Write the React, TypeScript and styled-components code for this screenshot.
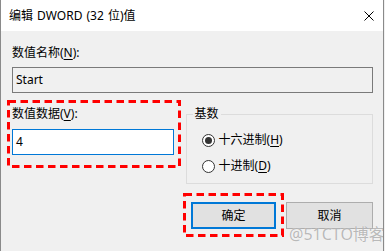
import styled, { createGlobalStyle } from 'styled-components'

const GlobalStyle = createGlobalStyle`
  html, body {
    margin: 0;
    padding: 0;
    background: #f0f0f0;
  }
  body {
    font-family: 'Segoe UI', 'Noto Sans', 'Noto Sans CJK SC', sans-serif;
    font-size: 12px;
    color: #000;
  }
`

const Window = styled.div`
  position: relative;
  width: 384px;
  height: 251px;
  box-sizing: border-box;
  border-left: 1px solid #8a8a8a;
  border-right: 1px solid #8a8a8a;
  background: #f0f0f0;
  display: flex;
  flex-direction: column;
  overflow: hidden;
`

const TitleBar = styled.div`
  height: 31px;
  flex: 0 0 31px;
  background: #fff;
  display: flex;
  align-items: center;
  justify-content: space-between;
  padding: 1px 9px 0 8px;
  box-sizing: border-box;
`

const Title = styled.span`
  font-size: 12px;
  line-height: 16px;
  word-spacing: 1px;
`

const Close = styled.svg`
  width: 10px;
  height: 10px;
  display: block;
`

const Body = styled.div`
  padding: 14px 10px 0 11px;
  display: flex;
  flex-direction: column;
`

const Label = styled.div`
  line-height: 16px;
  height: 16px;
  white-space: nowrap;

  u {
    text-decoration: underline;
    text-underline-offset: 2px;
  }
`

const TextBox = styled.div<{ $active?: boolean }>`
  height: 26px;
  box-sizing: border-box;
  border: 1px solid ${p => (p.$active ? '#0078d7' : '#7a7a7a')};
  background: ${p => (p.$active ? '#fff' : '#f0f0f0')};
  padding: 0 3px;
  display: flex;
  align-items: center;
  line-height: 16px;
`

const NameBox = styled(TextBox)`
  margin-top: 6px;
`

const Row = styled.div`
  display: flex;
  align-items: flex-start;
  margin-top: 13px;
`

const Annotated = styled.div`
  position: relative;
`

const DataColumn = styled(Annotated)`
  width: 162px;
  display: flex;
  flex-direction: column;
  gap: 7px;
`

const Frame = styled.svg<{ $left: number; $top: number }>`
  position: absolute;
  left: ${p => p.$left}px;
  top: ${p => p.$top}px;
  pointer-events: none;
  overflow: visible;
`

const GroupBox = styled.fieldset`
  margin: 0 0 0 12px;
  width: 188px;
  box-sizing: border-box;
  border: 1px solid #dcdcdc;
  padding: 5px 0 4px 15px;
  min-width: 0;

  legend {
    padding: 0 2px;
    margin-left: -9px;
    line-height: 16px;
    height: 16px;
  }
`

const RadioRow = styled.div`
  display: flex;
  align-items: center;
  gap: 4px;
  height: 26px;
  line-height: 16px;

  u {
    text-decoration: underline;
    text-underline-offset: 2px;
  }
`

const RadioDot = styled.span<{ $checked?: boolean }>`
  width: 13px;
  height: 13px;
  box-sizing: border-box;
  border-radius: 50%;
  border: 1px solid #333;
  background: #fff;
  display: flex;
  align-items: center;
  justify-content: center;

  &::after {
    content: '';
    width: 7px;
    height: 7px;
    border-radius: 50%;
    background: ${p => (p.$checked ? '#333' : 'transparent')};
  }
`

const Buttons = styled.div`
  display: flex;
  justify-content: flex-end;
  gap: 10px;
  margin-top: 18px;
`

const Button = styled.div<{ $default?: boolean; $w: number }>`
  width: ${p => p.$w}px;
  height: 27px;
  box-sizing: border-box;
  background: #e1e1e1;
  border: ${p => (p.$default ? '2px solid #0078d7' : '1px solid #adadad')};
  display: flex;
  align-items: center;
  justify-content: center;
  line-height: 16px;
`

const Watermark = styled.div`
  position: absolute;
  left: 288px;
  top: 224px;
  font-family: 'Noto Sans', 'Noto Sans CJK SC', sans-serif;
  font-size: 16px;
  line-height: 20px;
  color: rgba(140, 140, 140, 0.6);
  text-shadow: 0 0 1px rgba(255, 255, 255, 0.9);
  white-space: nowrap;
`

const DashedFrame = ({ left, top, w, h }: { left: number; top: number; w: number; h: number }) => (
  <Frame $left={left} $top={top} width={w} height={h} viewBox={`0 0 ${w} ${h}`}>
    <rect
      x={1.5}
      y={1.5}
      width={w - 3}
      height={h - 3}
      fill='none'
      stroke='#ff0000'
      strokeWidth={3}
      strokeDasharray='7.5 4.5'
    />
  </Frame>
)

export default function App() {
  return (
    <>
      <GlobalStyle />
      <Window>
        <TitleBar>
          <Title>编辑 DWORD (32 位)值</Title>
          <Close viewBox='0 0 10 10'>
            <path d='M0.5 0.5 L9.5 9.5 M9.5 0.5 L0.5 9.5' stroke='#000' strokeWidth={1} fill='none' />
          </Close>
        </TitleBar>
        <Body>
          <Label>
            数值名称(<u>N</u>):
          </Label>
          <NameBox>Start</NameBox>
          <Row>
            <DataColumn>
              <Label>
                数值数据(<u>V</u>):
              </Label>
              <TextBox $active>4</TextBox>
              <DashedFrame left={-5} top={-6} w={174} h={68} />
            </DataColumn>
            <GroupBox>
              <legend>基数</legend>
              <RadioRow>
                <RadioDot $checked />
                <span>
                  十六进制(<u>H</u>)
                </span>
              </RadioRow>
              <RadioRow>
                <RadioDot />
                <span>
                  十进制(<u>D</u>)
                </span>
              </RadioRow>
            </GroupBox>
          </Row>
          <Buttons>
            <Annotated>
              <Button $default $w={85}>确定</Button>
              <DashedFrame left={-8} top={-9} w={101} h={44} />
            </Annotated>
            <Button $w={87}>取消</Button>
          </Buttons>
        </Body>
        <Watermark>@51CTO博客</Watermark>
      </Window>
    </>
  )
}
